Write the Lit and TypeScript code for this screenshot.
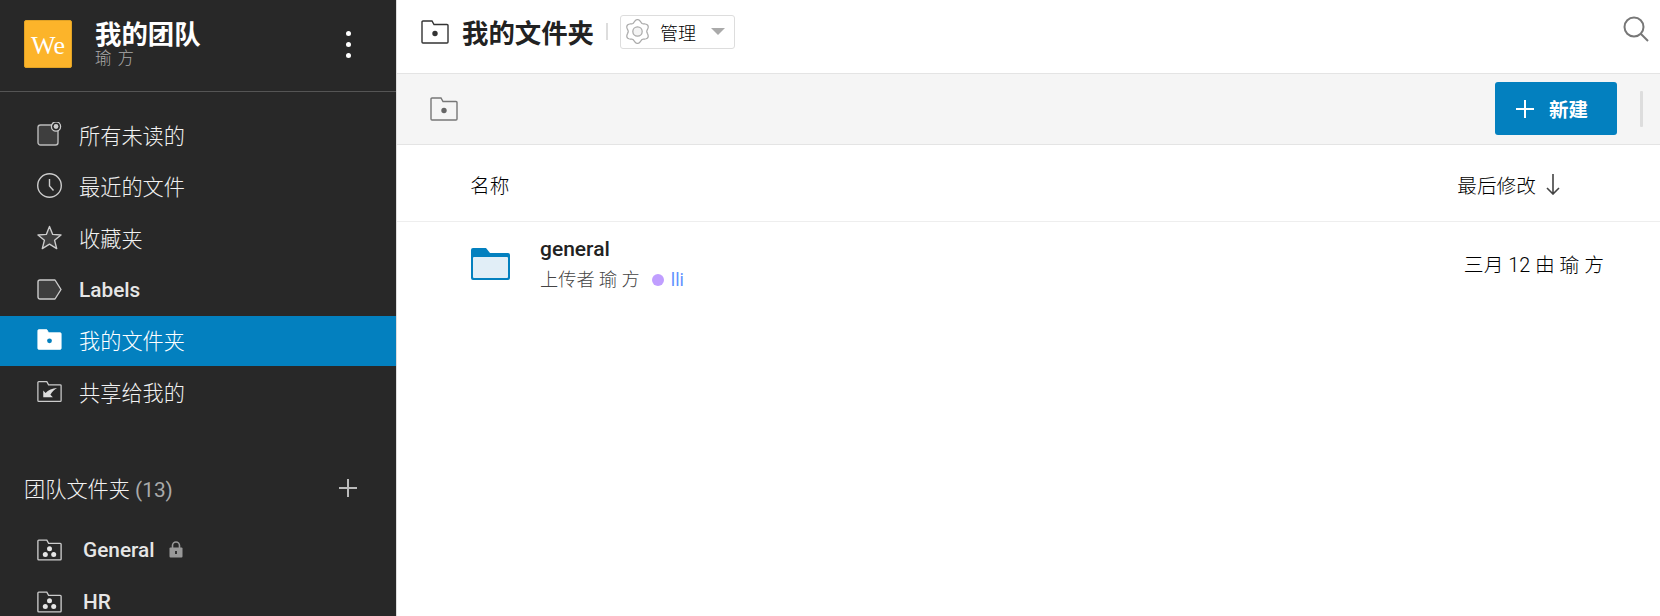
import { LitElement, html, css, svg } from 'lit';
import { customElement } from 'lit/decorators.js';

const folderPath = 'M1 3.500V22a1 1 0 0 0 1 1h24a1 1 0 0 0 1-1V5.500a1 1 0 0 0-1-1H13L11 1H2a1 1 0 0 0-1 1z';

// six soft lobes round the centre of a 24 box
const gearPath = () => {
  const pts: string[] = [];
  for (let i = 0; i < 72; i++) {
    const a = (i / 72) * Math.PI * 2;
    const r = 10.200 + 1.300 * Math.cos(6 * a);
    pts.push(`${(12 + r * Math.sin(a)).toFixed(2)} ${(12 - r * Math.cos(a)).toFixed(2)}`);
  }
  return `M${pts.join('L')}z`;
};

const icons = {
  unread: svg`<rect x="1" y="3" width="20" height="20" rx="2.500" fill="#3e3e3e" stroke="#bbb" stroke-width="1.400"/><circle cx="19" cy="4.500" r="4.600" fill="#282828" stroke="#ccc" stroke-width="1.300"/><circle cx="19" cy="4.500" r="2.400" fill="#ccc"/>`,
  clock: svg`<circle cx="12.500" cy="12.500" r="11.800" fill="none" stroke="#ccc" stroke-width="1.400"/><path d="M12.500 6v7l4 4.500" fill="none" stroke="#ccc" stroke-width="1.400"/>`,
  star: svg`<path d="M12.500 1.500l3.200 7.900 8.300.6-6.400 5.300 2.100 8.300-7.200-4.500-7.200 4.500 2.100-8.300L1 10l8.300-.6z" fill="#3e3e3e" stroke="#ccc" stroke-width="1.400" stroke-linejoin="round"/>`,
  label: svg`<path d="M1 5a2 2 0 0 1 2-2h15l6 9.500-6 9.500H3a2 2 0 0 1-2-2z" fill="#3e3e3e" stroke="#ccc" stroke-width="1.400" stroke-linejoin="round"/>`,
  shared: svg`<path d=${folderPath} fill="none" stroke="#ccc" stroke-width="1.400"/><path d="M7 18.500V11l2.600 2.600C12.500 10 17 8.500 22.500 8c-3 2-5.500 3.500-7.500 7.500l2.800 3z" fill="#ddd"/>`,
};

const folderDot = (stroke: string, dot: string, fill = 'none') => html`
  <svg width="28" height="24" viewBox="0 0 28 24">
    <path d=${folderPath} fill=${fill} stroke=${stroke} stroke-width="1.400"/>
    <circle cx="14" cy="13.500" r="2.700" fill=${dot}/>
  </svg>`;

const teamFolder = html`
  <svg width="25" height="22" viewBox="0 0 28 24">
    <path d=${folderPath} fill="none" stroke="#ccc" stroke-width="1.500"/>
    <circle cx="14" cy="10.500" r="2.800" fill="#e6e6e6"/>
    <circle cx="9.300" cy="17" r="2.800" fill="#e6e6e6"/>
    <circle cx="18.700" cy="17" r="2.800" fill="#e6e6e6"/>
  </svg>`;

@customElement('app-root')
export class AppRoot extends LitElement {
  static styles = css`
    :host {
      display: flex;
      width: 100%;
      height: 100vh;
      overflow: hidden;
      background: #fff;
      font-family: Roboto, 'Noto Sans CJK SC', sans-serif;
      color: #222;
    }
    svg { display: block; flex: none; }

    .sidebar {
      width: 396px;
      flex: none;
      background: #282828;
      color: #f2f2f2;
    }
    .brand {
      height: 92px;
      box-sizing: border-box;
      border-bottom: 1px solid #555;
      display: flex;
      padding: 20px 0 0 24px;
    }
    .logo {
      width: 48px;
      height: 48px;
      box-sizing: border-box;
      background: #fcb42a;
      border: 1px solid #e0a226;
      border-radius: 2px;
      color: #fff;
      font: 26px/49px 'Liberation Serif', serif;
      text-align: center;
    }
    .brand-text { margin-left: 23px; width: 251px; }
    .brand-title {
      font-size: 26.400px;
      line-height: 30px;
      font-weight: 700;
      color: #fff;
    }
    .brand-sub {
      font-size: 16.500px;
      line-height: 18px;
      letter-spacing: 1px;
      color: #aaa;
      font-weight: 300;
    }
    .dots {
      display: flex;
      flex-direction: column;
      gap: 6px;
      padding-top: 11px;
    }
    .dots span {
      width: 5px;
      height: 5px;
      border-radius: 50%;
      background: #fff;
    }

    .nav {
      display: flex;
      flex-direction: column;
      gap: 1.400px;
      margin-top: 18.400px;
    }
    .nav-item {
      height: 50px;
      box-sizing: border-box;
      display: flex;
      align-items: center;
      padding: 0 0 2px 37px;
      gap: 17px;
      font-size: 21.200px;
      font-weight: 300;
    }
    .nav-item svg { width: 25px; height: 25px; }
    .nav-item.strong { padding-bottom: 0; font-weight: 500; font-size: 20.800px; color: #e6e6e6; }
    .nav-item.active { background: #0380bf; color: #fff; }

    .section {
      display: flex;
      align-items: center;
      justify-content: space-between;
      margin-top: 52.600px;
      padding: 0 38px 0 24px;
      height: 36px;
      font-size: 21.200px;
      font-weight: 300;
    }
    .section small { font-size: 20.800px; color: #aaa; font-weight: 400; }
    .teams { margin-top: 18px; }
    .team {
      height: 52px;
      display: flex;
      align-items: center;
      padding-left: 37px;
      gap: 21px;
      font-size: 20.800px;
      font-weight: 500;
      color: #e6e6e6;
    }
    .team .lock { margin-left: -7px; }

    .main {
      flex: 1;
      min-width: 0;
      border-left: 1px solid #ddd;
    }
    .topbar {
      height: 63px;
      border-bottom: 1px solid #e4e4e4;
      display: flex;
      align-items: center;
      padding: 0 11px 10px 24px;
    }
    .topbar h1 {
      margin: 0 0 0 13px;
      font-size: 26.400px;
      font-weight: 700;
      color: #222;
    }
    .search { margin-bottom: 5px; }
    .sep { width: 2px; height: 17px; background: #ddd; margin: 0 12px; }
    .manage {
      width: 115px;
      height: 34px;
      box-sizing: border-box;
      border: 1px solid #ddd;
      border-radius: 3px;
      display: flex;
      align-items: center;
      padding-left: 4px;
      font-size: 18px;
      font-weight: 300;
      color: #000;
    }
    .manage span { margin-left: 10px; }
    .caret {
      margin-left: 15px;
      border: 7.500px solid transparent;
      border-top: 7px solid #aaa;
      border-bottom: 0;
    }
    .spacer { flex: 1; }

    .toolbar {
      height: 70px;
      background: #f5f5f5;
      border-bottom: 1px solid #e4e4e4;
      display: flex;
      align-items: center;
      padding: 0 17px 0 33px;
    }
    .btn-new {
      width: 122px;
      height: 53px;
      margin-top: -1px;
      background: #0380bf;
      border-radius: 3px;
      color: #fff;
      display: flex;
      align-items: center;
      padding-left: 21px;
      box-sizing: border-box;
      gap: 15px;
      font-size: 19.500px;
      font-weight: 700;
    }
    .bar { width: 3px; height: 36px; margin-left: 23px; background: #ddd; border-radius: 1px; }

    .thead {
      height: 77px;
      box-sizing: border-box;
      border-bottom: 1px solid #eee;
      display: flex;
      align-items: center;
      padding: 3px 100px 0 73px;
      font-size: 19.700px;
      font-weight: 300;
      color: #000;
    }
    .sort { display: flex; align-items: center; gap: 10px; }

    .row {
      display: flex;
      padding: 26px 56px 0 74px;
    }
    .row-text { margin-left: 30px; margin-top: -12px; }
    .row-name { font-size: 21px; line-height: 26px; font-weight: 500; color: #222; }
    .row-meta {
      display: flex;
      align-items: center;
      font-size: 18.200px;
      line-height: 30px;
      font-weight: 300;
      color: #444;
      margin-top: 3px;
    }
    .tag-dot {
      width: 12px;
      height: 12px;
      border-radius: 50%;
      background: #c09eff;
      margin: 0 7px 0 12px;
    }
    .tag { color: #5f93ff; font-weight: 400; font-size: 18px; }
    .row-date { font-size: 19.800px; font-weight: 300; color: #000; margin-top: 1px; }
  `;

  render() {
    return html`
      <aside class="sidebar">
        <div class="brand">
          <div class="logo">We</div>
          <div class="brand-text">
            <div class="brand-title">我的团队</div>
            <div class="brand-sub">瑜 方</div>
          </div>
          <div class="dots"><span></span><span></span><span></span></div>
        </div>
        <nav class="nav">
          <div class="nav-item"><svg viewBox="0 0 25 25">${icons.unread}</svg>所有未读的</div>
          <div class="nav-item"><svg viewBox="0 0 25 25">${icons.clock}</svg>最近的文件</div>
          <div class="nav-item"><svg viewBox="0 0 25 25">${icons.star}</svg>收藏夹</div>
          <div class="nav-item strong"><svg viewBox="0 0 25 25">${icons.label}</svg>Labels</div>
          <div class="nav-item active">
            <svg viewBox="0 0 28 24">
              <path d=${folderPath} fill="#fff" stroke="#fff"/>
              <circle cx="14" cy="13.500" r="2.700" fill="#0380bf"/>
            </svg>
            我的文件夹
          </div>
          <div class="nav-item"><svg viewBox="0 0 28 24">${icons.shared}</svg>共享给我的</div>
        </nav>
        <div class="section">
          <div>团队文件夹 <small>(13)</small></div>
          <svg width="20" height="20" viewBox="0 0 20 20"><path d="M10 1v18M1 10h18" stroke="#bbb" stroke-width="2"/></svg>
        </div>
        <div class="teams">
          <div class="team">
            ${teamFolder}General
            <svg class="lock" width="14" height="17" viewBox="0 0 14 17">
              <path d="M3.500 7V4.500a3.500 3.500 0 0 1 7 0V7" fill="none" stroke="#999" stroke-width="1.600"/>
              <rect x="0.5" y="6.500" width="13" height="10" rx="1" fill="#999"/>
              <rect x="6" y="10" width="2" height="3" fill="#333"/>
            </svg>
          </div>
          <div class="team">${teamFolder}HR</div>
        </div>
      </aside>
      <main class="main">
        <div class="topbar">
          ${folderDot('#333', '#333')}
          <h1>我的文件夹</h1>
          <div class="sep"></div>
          <div class="manage">
            <svg width="25" height="25" viewBox="0 0 24 24" stroke="#aaa" stroke-width="1.200">
              <path d=${gearPath()} fill="none" stroke-linejoin="round"/>
              <circle cx="12" cy="12" r="4.500" fill="#f4f4f4"/>
            </svg>
            <span>管理</span>
            <div class="caret"></div>
          </div>
          <div class="spacer"></div>
          <svg class="search" width="26" height="26" viewBox="0 0 26 26" fill="none" stroke="#777" stroke-width="2">
            <circle cx="11" cy="11" r="9.500"/>
            <path d="M18 18l7 7"/>
          </svg>
        </div>
        <div class="toolbar">
          ${folderDot('#777', '#666')}
          <div class="spacer"></div>
          <div class="btn-new">
            <svg width="18" height="18" viewBox="0 0 18 18"><path d="M9 0v18M0 9h18" stroke="#fff" stroke-width="2"/></svg>
            新建
          </div>
          <div class="bar"></div>
        </div>
        <div class="thead">
          <div>名称</div>
          <div class="spacer"></div>
          <div class="sort">
            最后修改
            <svg width="14" height="21" viewBox="0 0 14 21" fill="none" stroke="#444" stroke-width="1.600"><path d="M7 0v20M1 14l6 6 6-6"/></svg>
          </div>
        </div>
        <div class="row">
          <svg width="39" height="32" viewBox="0 0 39 32">
            <path d="M0 2a2 2 0 0 1 2-2h13l4 5h18a2 2 0 0 1 2 2v23a2 2 0 0 1-2 2H2a2 2 0 0 1-2-2z" fill="#0380bf"/>
            <rect x="2" y="9" width="35" height="21" rx="1" fill="#e1eef7"/>
          </svg>
          <div class="row-text">
            <div class="row-name">general</div>
            <div class="row-meta">上传者 瑜 方<span class="tag-dot"></span><span class="tag">lli</span></div>
          </div>
          <div class="spacer"></div>
          <div class="row-date">三月 12 由 瑜 方</div>
        </div>
      </main>
    `;
  }
}
